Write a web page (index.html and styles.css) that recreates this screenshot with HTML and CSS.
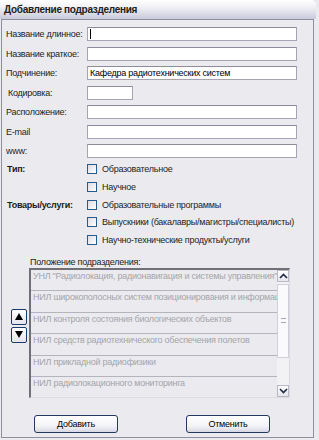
FILE: index.html
```html
<!DOCTYPE html>
<html lang="ru">
<head>
    <meta charset="UTF-8">
    <title>Добавление подразделения</title>
    <link rel="stylesheet" href="styles.css">
</head>
<body>
    <div class="window">
        <div class="titlebar">Добавление подразделения</div>
        <div class="content">
            <div class="fields">
                <div class="row"><div class="label">Название длинное:</div><div class="input wide"><span class="caret"></span></div></div>
                <div class="row"><div class="label">Название краткое:</div><div class="input wide"></div></div>
                <div class="row"><div class="label">Подчинение:</div><div class="input wide">Кафедра радиотехнических систем</div></div>
                <div class="row"><div class="label indent">Кодировка:</div><div class="input short"></div></div>
                <div class="row"><div class="label">Расположение:</div><div class="input wide"></div></div>
                <div class="row"><div class="label">E-mail</div><div class="input wide"></div></div>
                <div class="row"><div class="label">www:</div><div class="input wide"></div></div>
            </div>

            <div class="group">
                <div class="group-label">Тип:</div>
                <div class="checks">
                    <div class="check"><span class="box"></span>Образовательное</div>
                    <div class="check"><span class="box"></span>Научное</div>
                </div>
            </div>
            <div class="group">
                <div class="group-label">Товары/услуги:</div>
                <div class="checks">
                    <div class="check"><span class="box"></span>Образовательные программы</div>
                    <div class="check"><span class="box"></span>Выпускники (бакалавры/магистры/специалисты)</div>
                    <div class="check"><span class="box"></span>Научно-технические продукты/услуги</div>
                </div>
            </div>

            <div class="position">
                <div class="arrows">
                    <div class="arrow-btn"><span class="tri up"></span></div>
                    <div class="arrow-btn"><span class="tri down"></span></div>
                </div>
                <div class="list-wrap">
                    <div class="list-caption">Положение подразделения:</div>
                    <div class="list">
                        <div class="items">
                            <div class="item">УНЛ "Радиолокация, радионавигация и системы управления"</div>
                            <div class="item">НИЛ широкополосных систем позиционирования и информаци</div>
                            <div class="item">НИЛ контроля состояния биологических объектов</div>
                            <div class="item">НИЛ средств радиотехнического обеспечения полетов</div>
                            <div class="item">НИЛ прикладной радиофизики</div>
                            <div class="item last">НИЛ радиолокационного мониторинга</div>
                        </div>
                        <div class="scrollbar">
                            <div class="sb-btn">
                                <svg width="9" height="6" viewBox="0 0 9 6"><path d="M1 5 L4.5 1.5 L8 5" fill="none" stroke="#1e2a44" stroke-width="1.6"/></svg>
                            </div>
                            <div class="sb-thumb"><span class="grip"></span></div>
                            <div class="sb-track"></div>
                            <div class="sb-btn">
                                <svg width="9" height="6" viewBox="0 0 9 6"><path d="M1 1 L4.5 4.5 L8 1" fill="none" stroke="#1e2a44" stroke-width="1.6"/></svg>
                            </div>
                        </div>
                    </div>
                </div>
            </div>

            <div class="actions">
                <div class="button">Добавить</div>
                <div class="button">Отменить</div>
            </div>
        </div>
    </div>
</body>
</html>
```

FILE: styles.css
```css
body {
    margin: 0;
    background-color: #ebebef;
    font-family: "Liberation Sans", Arial, sans-serif;
    font-size: 9px;
    letter-spacing: -0.25px;
    color: #1c1c1c;
}

.window {
    width: 319px;
    height: 440px;
}

.titlebar {
    height: 19px;
    width: 316px;
    box-sizing: border-box;
    padding: 4px 0 0 4px;
    font-size: 10px;
    letter-spacing: -0.3px;
    font-weight: bold;
    color: #202020;
    background: linear-gradient(#ffffff 0%, #f2f2f6 35%, #c9cadb 100%);
    border-top-right-radius: 5px;
    white-space: nowrap;
}

.content {
    margin-left: 1px;
    width: 313px;
    height: 419px;
    box-sizing: border-box;
    border: 1px solid #8e8e9c;
    padding: 7px 0 0 4px;
}

.fields {
    display: flex;
    flex-direction: column;
    gap: 5.5px;
}

.row {
    display: flex;
    align-items: center;
    height: 14px;
}

.label {
    flex: 0 0 81px;
    white-space: nowrap;
}

.label.indent {
    padding-left: 2px;
    flex-basis: 79px;
}

.input {
    flex: none;
    height: 14px;
    box-sizing: border-box;
    background-color: #fff;
    border: 1px solid #a4a4b4;
    border-top-color: #8c8c9c;
    padding: 1px 2px;
    line-height: 11px;
    color: #000;
    white-space: nowrap;
}

.input.wide {
    width: 210px;
}

.input.short {
    width: 46px;
}

.caret {
    display: inline-block;
    width: 1px;
    height: 10px;
    background-color: #000;
    vertical-align: top;
}

.group {
    display: flex;
    margin-top: 6px;
}

.group + .group {
    margin-top: 8px;
}

.group-label {
    flex: 0 0 80px;
    padding-left: 1px;
    font-weight: bold;
    line-height: 10px;
    white-space: nowrap;
}

.checks {
    display: flex;
    flex-direction: column;
    gap: 7.5px;
}

.check {
    display: flex;
    align-items: center;
    height: 10px;
    white-space: nowrap;
}

.box {
    width: 8px;
    height: 8px;
    margin-right: 5px;
    border: 1px solid #2a5a8a;
    background: linear-gradient(135deg, #dcdce4, #ffffff);
}

.position {
    display: flex;
    margin-top: 12px;
}

.arrows {
    flex: 0 0 23px;
    padding: 52px 0 0 5px;
    box-sizing: border-box;
    display: flex;
    flex-direction: column;
    gap: 2px;
}

.arrow-btn {
    width: 14px;
    height: 14px;
    border: 1px solid #1c3c6c;
    border-radius: 2px;
    background: linear-gradient(#ffffff, #e4e4ec);
    display: flex;
    align-items: center;
    justify-content: center;
}

.tri {
    width: 0;
    height: 0;
    border-left: 4px solid transparent;
    border-right: 4px solid transparent;
}

.tri.up {
    border-bottom: 7px solid #000;
}

.tri.down {
    border-top: 7px solid #000;
}

.list-wrap {
    display: flex;
    flex-direction: column;
}

.list-caption {
    height: 10px;
    line-height: 10px;
    margin-bottom: 1px;
    padding-left: 1px;
}

.list {
    display: flex;
    width: 261px;
    height: 130px;
    box-sizing: border-box;
    border-top: 2px solid #707078;
    border-left: 2px solid #707078;
    border-right: 1px solid #dcdce0;
    border-bottom: 1px solid #dcdce0;
    overflow: hidden;
}

.items {
    flex: 1;
    min-width: 0;
    overflow: hidden;
}

.item {
    height: 21.5px;
    box-sizing: border-box;
    border-bottom: 1px solid #b4b4bc;
    padding: 1px 0 0 2px;
    white-space: nowrap;
    overflow: hidden;
    color: #a4a4aa;
    line-height: 11px;
}

.item.last {
    border-bottom: none;
}

.scrollbar {
    flex: 0 0 12px;
    display: flex;
    flex-direction: column;
    background-color: #f2f2f4;
}

.sb-btn {
    height: 12px;
    box-sizing: border-box;
    border: 1px solid #b8b8c8;
    background: linear-gradient(#ffffff, #e6e6ee);
    display: flex;
    align-items: center;
    justify-content: center;
}

.sb-thumb {
    height: 74px;
    margin-top: 2px;
    box-sizing: border-box;
    border: 1px solid #d0d0dc;
    background-color: #fafafc;
    display: flex;
    align-items: center;
    justify-content: center;
}

.grip {
    width: 5px;
    height: 3px;
    border-top: 1px solid #a8a8b8;
    border-bottom: 1px solid #a8a8b8;
}

.sb-track {
    flex: 1;
}

.actions {
    display: flex;
    gap: 68px;
    padding-left: 28px;
    margin-top: 17px;
}

.button {
    width: 84px;
    height: 18px;
    box-sizing: border-box;
    border: 1px solid #22385e;
    border-radius: 3px;
    background: linear-gradient(#ffffff 0%, #f4f4f8 60%, #d8d8e4 100%);
    text-align: center;
    line-height: 16px;
    color: #000;
}
```
